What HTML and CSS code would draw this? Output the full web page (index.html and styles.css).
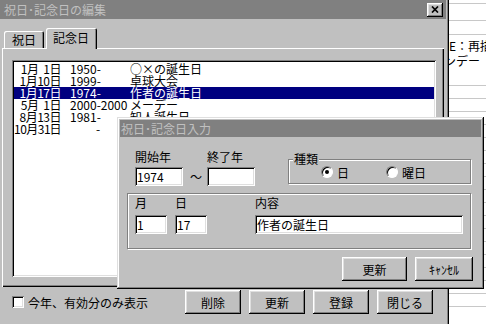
FILE: index.html
```html
<!DOCTYPE html>
<html lang="ja">
  <head>
    <meta charset="UTF-8" />
    <title>祝日･記念日の編集</title>
    <link rel="stylesheet" href="styles.css">
  </head>
  <body>
    <!-- window behind, mostly hidden -->
    <div class="backapp">
      <div class="rule h3"></div>
      <div class="rule h16"></div>
      <div class="rule h13"></div>
      <div class="rule textblock">
        <div>E：再描</div>
        <div class="cut">ンデー</div>
      </div>
      <div class="rule h12"></div>
      <div class="rule h12"></div>
      <div class="rule h12"></div>
      <div class="rule h12"></div>
      <div class="rule h12"></div>
      <div class="rule h12"></div>
      <div class="rule h12"></div>
      <div class="rule h12"></div>
      <div class="rule h12"></div>
      <div class="rule h12"></div>
      <div class="rule h12"></div>
      <div class="rule h12"></div>
      <div class="rule h12"></div>
      <div class="rule h12"></div>
      <div class="rule h12"></div>
      <div class="rule h12"></div>
      <div class="rule h12"></div>
      <div class="rule h12"></div>
    </div>

    <div class="win main-win">
      <div class="titlebar">
        <span>祝日･記念日の編集</span>
        <span class="close-btn">
          <svg width="8" height="7" viewBox="0 0 8 7"><path d="M1 0.5L7 6.5M7 0.5L1 6.5" stroke="#000" stroke-width="1.7"/></svg>
        </span>
      </div>

      <div class="tabs">
        <div class="tab">祝日</div>
        <div class="tab active">記念日</div>
      </div>

      <div class="panel">
        <div class="listbox">
          <div class="row"><span class="date"><span>1</span><span>月</span><span class="dn">1</span><span>日</span></span><span>1950-</span><span>○×の誕生日</span></div>
          <div class="row"><span class="date"><span>1</span><span>月</span><span class="dn">10</span><span>日</span></span><span>1999-</span><span>卓球大会</span></div>
          <div class="row selected"><span class="date"><span>1</span><span>月</span><span class="dn">17</span><span>日</span></span><span>1974-</span><span>作者の誕生日</span></div>
          <div class="row"><span class="date"><span>5</span><span>月</span><span class="dn">1</span><span>日</span></span><span>2000-2000</span><span>メーデー</span></div>
          <div class="row"><span class="date"><span>8</span><span>月</span><span class="dn">13</span><span>日</span></span><span>1981-</span><span>知人誕生日</span></div>
          <div class="row"><span class="date"><span>10</span><span>月</span><span class="dn">31</span><span>日</span></span><span class="dash">-</span><span></span></div>
        </div>
      </div>

      <div class="bottombar">
        <label class="check"><span class="checkbox"></span>今年、有効分のみ表示</label>
        <div class="btns">
          <button class="btn">削除</button>
          <button class="btn">更新</button>
          <button class="btn">登録</button>
          <button class="btn">閉じる</button>
        </div>
      </div>
    </div>

    <div class="win dialog">
      <div class="titlebar dlg-title">祝日･記念日入力</div>
      <div class="dlg-body">
        <div class="top-row">
          <div class="field">
            <label>開始年</label>
            <input class="edit w48" type="text" value="1974" />
          </div>
          <span class="tilde">～</span>
          <div class="field">
            <label>終了年</label>
            <input class="edit w48" type="text" value="" />
          </div>
          <div class="group kind">
            <span class="group-label">種類</span>
            <div class="radios">
              <span class="radio on"></span><span class="radio-text">日</span>
              <span class="radio second"></span><span class="radio-text">曜日</span>
            </div>
          </div>
        </div>

        <div class="group date-group">
          <div class="field">
            <label>月</label>
            <input class="edit w32" type="text" value="1" />
          </div>
          <div class="field">
            <label>日</label>
            <input class="edit w32" type="text" value="17" />
          </div>
          <div class="field memo">
            <label>内容</label>
            <input class="edit w208" type="text" value="作者の誕生日" />
          </div>
        </div>

        <div class="dlg-btns">
          <button class="btn wide">更新</button>
          <button class="btn cancel">ｷｬﾝｾﾙ</button>
        </div>
      </div>
    </div>
  </body>
</html>
```

FILE: styles.css
```css
body {
  margin: 0;
  width: 486px;
  height: 324px;
  overflow: hidden;
  position: relative;
  background: #fff;
  font-family: "Noto Sans CJK JP", sans-serif;
  font-size: 12px;
  color: #000;
}

/* window behind */
.backapp {
  position: absolute;
  left: 449px;
  top: 0;
  right: 0;
  bottom: 0;
  background: #fff;
  display: flex;
  flex-direction: column;
  overflow: hidden;
  white-space: nowrap;
}
.rule {
  flex: none;
  border-bottom: 1px solid #c8c8c8;
}
.h3 { height: 3px; }
.h16 { height: 16px; }
.h13 { height: 13px; }
.h12 { height: 12px; }
.textblock {
  height: 34px;
  padding-top: 3px;
  line-height: 15px;
  border-bottom-color: #fff;
}
.cut {
  text-indent: -5px;
}

/* generic window */
.win {
  position: absolute;
  box-sizing: border-box;
  padding: 3px;
  background: #c0c0c0;
  box-shadow: inset -1px -1px #000, inset 1px 1px #dfdfdf,
    inset -2px -2px #808080, inset 2px 2px #fff;
}
.main-win {
  left: -3px;
  top: -3px;
  width: 452px;
  height: 340px;
  z-index: 1;
}
.titlebar {
  height: 19px;
  background: #808080;
  color: #c0c0c0;
  display: flex;
  align-items: center;
  justify-content: space-between;
  padding: 0 3px 0 4px;
  line-height: 14px;
}
.close-btn {
  width: 16px;
  height: 14px;
  box-sizing: border-box;
  background: #c0c0c0;
  display: flex;
  align-items: center;
  justify-content: center;
  box-shadow: inset -1px -1px #000, inset 1px 1px #fff,
    inset -2px -2px #808080, inset 2px 2px #dfdfdf;
}

/* tabs */
.tabs {
  margin-top: 9px;
  height: 20px;
  padding-left: 4px;
  display: flex;
  align-items: flex-end;
}
.tab {
  height: 17px;
  box-sizing: border-box;
  padding: 2px 8px 0;
  line-height: 14px;
  border-radius: 2px 2px 0 0;
  box-shadow: inset 1px 1px #fff, inset -1px 0 #000, inset -2px 0 #808080;
}
.tab.active {
  height: 21px;
  margin-left: 2px;
  margin-bottom: -1px;
  padding: 3px 8px 0 7px;
  width: 51px;
  background: #c0c0c0;
  position: relative;
  z-index: 1;
}
.panel {
  margin: 0 2px;
  height: 239px;
  box-sizing: border-box;
  padding: 12px 0 0 10px;
  box-shadow: inset 1px 1px #fff, inset -1px -1px #000, inset -2px -2px #808080;
}

/* list */
.listbox {
  width: 424px;
  height: 217px;
  box-sizing: border-box;
  padding: 3px 2px 0;
  background: #fff;
  box-shadow: inset 1px 1px #808080, inset -1px -1px #fff,
    inset 2px 2px #000, inset -2px -2px #dfdfdf;
}
.row {
  display: grid;
  grid-template-columns: 47px 51px 1fr;
  column-gap: 9px;
  height: 12px;
  line-height: 12px;
  white-space: nowrap;
}
.date {
  display: flex;
  justify-content: flex-end;
  letter-spacing: -0.5px;
}
.date .dn {
  min-width: 11px;
  text-align: right;
}
.row .dash {
  padding-left: 26px;
}
.row.selected {
  background: #000080;
  color: #fff;
}

/* bottom bar */
.bottombar {
  display: flex;
  align-items: center;
  height: 24px;
  padding: 3px 13px 0 12px;
}
.check {
  display: flex;
  align-items: center;
  gap: 4px;
}
.checkbox {
  width: 12px;
  height: 12px;
  background: #fff;
  box-shadow: inset 1px 1px #808080, inset -1px -1px #fff,
    inset 2px 2px #000, inset -2px -2px #dfdfdf;
}
.btns {
  margin-left: auto;
  display: flex;
  gap: 8px;
}
.btn {
  width: 56px;
  height: 24px;
  padding: 0;
  border: none;
  background: #c0c0c0;
  font: inherit;
  color: #000;
  white-space: nowrap;
  box-shadow: inset -1px -1px #000, inset 1px 1px #fff,
    inset -2px -2px #808080, inset 2px 2px #dfdfdf;
}

/* input dialog */
.dialog {
  left: 117px;
  top: 117px;
  width: 367px;
  height: 172px;
  z-index: 2;
}
.dlg-title {
  height: 17px;
  padding-left: 1px;
}
.dlg-body {
  padding: 13px 10px 0 7px;
}
.top-row {
  display: flex;
  align-items: flex-end;
  padding-left: 8px;
}
.field {
  display: flex;
  flex-direction: column;
}
.field label {
  line-height: 14px;
  margin-bottom: 3px;
}
.edit {
  height: 19px;
  box-sizing: border-box;
  border: none;
  padding: 0 2px;
  background: #fff;
  font: inherit;
  color: #000;
  outline: none;
  box-shadow: inset 1px 1px #808080, inset -1px -1px #fff,
    inset 2px 2px #000, inset -2px -2px #dfdfdf;
}
.w48 { width: 48px; }
.w32 { width: 32px; }
.w208 { width: 208px; }
.tilde {
  line-height: 19px;
  margin: 0 5px 0 7px;
}

.group {
  position: relative;
  border: 1px solid #808080;
  box-shadow: inset 1px 1px #fff, 1px 1px #fff;
}
.group-label {
  position: absolute;
  top: -8px;
  left: 4px;
  padding: 0 1px;
  line-height: 14px;
  background: #c0c0c0;
}
.kind {
  width: 183px;
  height: 25px;
  box-sizing: border-box;
  margin-left: auto;
  margin-bottom: 2px;
}
.radios {
  display: flex;
  align-items: center;
  height: 12px;
  padding: 6px 0 0 32px;
}
.radio {
  width: 12px;
  height: 12px;
  box-sizing: border-box;
  border-radius: 50%;
  background: #fff;
  border: 1px solid;
  border-color: #808080 #fff #fff #808080;
  box-shadow: inset 1px 1px #000;
  display: flex;
  align-items: center;
  justify-content: center;
}
.radio.on::after {
  content: "";
  width: 4px;
  height: 4px;
  border-radius: 50%;
  background: #000;
}
.radio.second {
  margin-left: 37px;
}
.radio-text {
  margin-left: 4px;
}

.date-group {
  margin-top: 7px;
  display: flex;
  gap: 8px;
  padding: 2px 0 14px 7px;
}
.date-group .field label {
  margin-bottom: 5px;
}
.date-group .memo {
  margin-left: 40px;
}

.dlg-btns {
  display: flex;
  justify-content: flex-end;
  gap: 8px;
  margin: 8px -2px 0 0;
}
.btn.wide {
  width: 65px;
}
.btn.cancel {
  width: 58px;
}
```
